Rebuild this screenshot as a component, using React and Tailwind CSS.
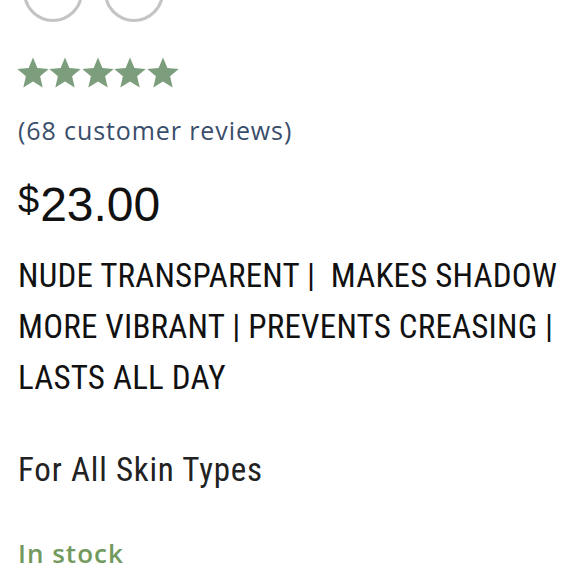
import React from "react"

const Star = () => (
    <svg width="32" height="31" viewBox="0 0 32 31">
        <polygon
            points="16,0.5 20.4,10.9 31.7,11.9 23.1,19.3 25.7,30.4 16,24.5 6.3,30.4 8.9,19.3 0.3,11.9 11.6,10.9"
            fill="#7c9e7d"
        />
    </svg>
)

const App = () => {
    return (
        <div className="w-[580px] h-[580px] overflow-hidden bg-white pl-[18px]">
            <div className="flex gap-[21px] ml-[5px] -mt-[38px]">
                <div className="w-[60px] h-[60px] rounded-full border-[3px] border-[#c4c4c4]" />
                <div className="w-[60px] h-[60px] rounded-full border-[3px] border-[#c4c4c4]" />
            </div>

            <div className="flex gap-[0.4px] mt-[35px] -ml-[1px]">
                {[0, 1, 2, 3, 4].map((i) => (
                    <Star key={i} />
                ))}
            </div>

            <p className="mt-[27px] text-[25px] leading-[30px] tracking-[0.9px] text-[#3a4e6b] font-['Open_Sans',sans-serif]">
                (68 customer reviews)
            </p>

            <p className="mt-[36px] text-[48px] leading-[48px] text-[#111] font-['Liberation_Sans',sans-serif]">
                <span className="text-[38px] align-top leading-none mr-[1px]">$</span>23.00
            </p>

            <p className="mt-[21px] text-[33px] leading-[51px] tracking-[0.2px] text-[#111] font-['Roboto',sans-serif] font-stretch-condensed">
                NUDE TRANSPARENT |&nbsp; MAKES SHADOW MORE VIBRANT | PREVENTS CREASING | LASTS ALL DAY
            </p>

            <p className="mt-[41px] text-[33px] leading-[51px] tracking-[0.8px] text-[#222] font-['Roboto',sans-serif] font-stretch-condensed">
                For All Skin Types
            </p>

            <p className="mt-[42px] text-[26px] leading-[32px] font-semibold tracking-[1px] text-[#739a5e] font-['Open_Sans',sans-serif]">
                In stock
            </p>
        </div>
    )
}

export default App
